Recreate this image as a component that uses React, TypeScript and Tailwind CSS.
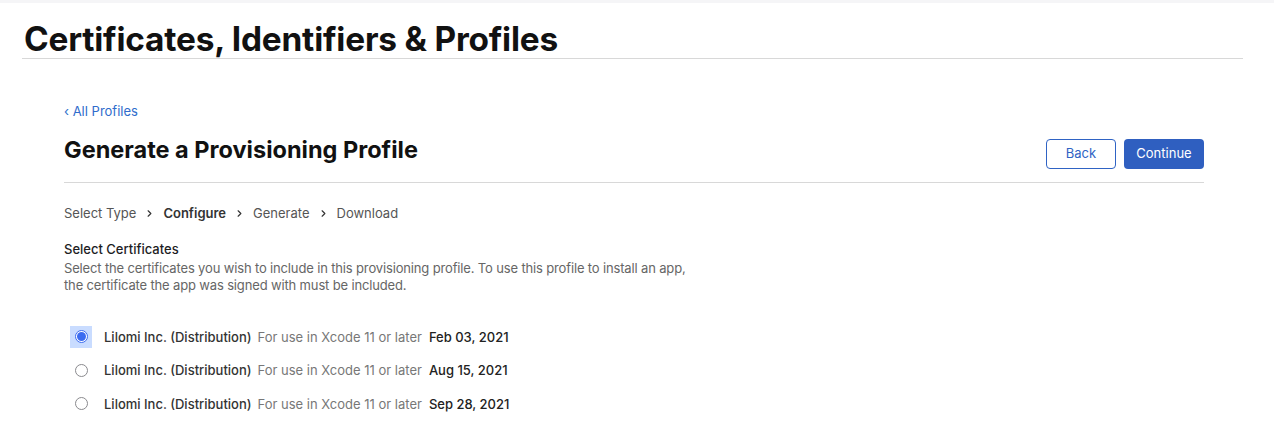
import { ChevronRight } from "lucide-react";

const certs = [
  { name: "Lilomi Inc. (Distribution)", note: "For use in Xcode 11 or later", date: "Feb 03, 2021", checked: true },
  { name: "Lilomi Inc. (Distribution)", note: "For use in Xcode 11 or later", date: "Aug 15, 2021", checked: false },
  { name: "Lilomi Inc. (Distribution)", note: "For use in Xcode 11 or later", date: "Sep 28, 2021", checked: false },
];

const steps = ["Select Type", "Configure", "Generate", "Download"];

function Radio({ checked }: { checked: boolean }) {
  if (checked) {
    return (
      <span className="flex h-[22px] w-[22px] items-center justify-center bg-[#c9dcff]">
        <span className="flex h-[13px] w-[13px] items-center justify-center rounded-full border border-[#3c6cf0] bg-white">
          <span className="h-[9px] w-[9px] rounded-full bg-[#3c6cf0]" />
        </span>
      </span>
    );
  }
  return (
    <span className="flex h-[22px] w-[22px] items-center justify-center">
      <span className="h-[13px] w-[13px] rounded-full border border-[#8a8a8e] bg-white" />
    </span>
  );
}

export default function App() {
  return (
    <div className="min-h-[435px] w-full bg-white font-['Inter',sans-serif] text-[#1d1d1f]">
      <div className="h-[3px] bg-[#f5f5f7]" />
      <div className="ml-[22px] mr-[31px] border-b border-[#d8d8d8] pt-[17px]">
        <h1 className="pl-[2px] text-[33.4px] font-bold leading-[38px] tracking-[-0.2px] text-[#111]">
          Certificates, Identifiers &amp; Profiles
        </h1>
      </div>

      <div className="ml-[64px] mr-[70px] pt-[39px]">
        <a className="text-[13px] leading-[16px] text-[#2f6ccc]">‹ All Profiles</a>

        <div className="mt-[14px] flex items-start justify-between border-b border-[#d8d8d8] pb-[13px]">
          <h2 className="text-[23.5px] font-bold leading-[28px] text-[#111]">Generate a Provisioning Profile</h2>
          <div className="mt-[3px] flex gap-[8px]">
            <button className="h-[30px] w-[70px] rounded-[4px] border border-[#2f63c4] bg-white text-[13px] text-[#2f63c4]">
              Back
            </button>
            <button className="h-[30px] w-[80px] rounded-[4px] bg-[#2f5fc0] text-[13px] text-white">
              Continue
            </button>
          </div>
        </div>

        <div className="mt-[22px] flex items-center text-[13px] leading-[16px] text-[#555]">
          {steps.map((s, i) => (
            <span key={s} className="flex items-center">
              {i > 0 && <ChevronRight className="mx-[8px] h-[11px] w-[11px] text-[#333]" strokeWidth={2.5} />}
              <span className={s === "Configure" ? "font-semibold text-[#333]" : ""}>{s}</span>
            </span>
          ))}
        </div>

        <div className="mt-[20px] text-[13px] leading-[17.5px]">
          <div className="font-medium text-[#1d1d1f]">Select Certificates</div>
          <p className="mt-[1px] tracking-[-0.15px] text-[#666]">
            Select the certificates you wish to include in this provisioning profile. To use this profile to install an app,
            <br />
            the certificate the app was signed with must be included.
          </p>
        </div>

        <div className="mt-[31px] flex flex-col gap-[11.5px]">
          {certs.map((c) => (
            <label key={c.date} className="flex items-center text-[13px] leading-[22px]">
              <span className="ml-[6px]">
                <Radio checked={c.checked} />
              </span>
              <span className="ml-[12px] font-medium text-[#333]">{c.name}</span>
              <span className="ml-[6px] text-[#777]">{c.note}</span>
              <span className="ml-[7px] font-medium text-[#222]">{c.date}</span>
            </label>
          ))}
        </div>
      </div>
    </div>
  );
}
